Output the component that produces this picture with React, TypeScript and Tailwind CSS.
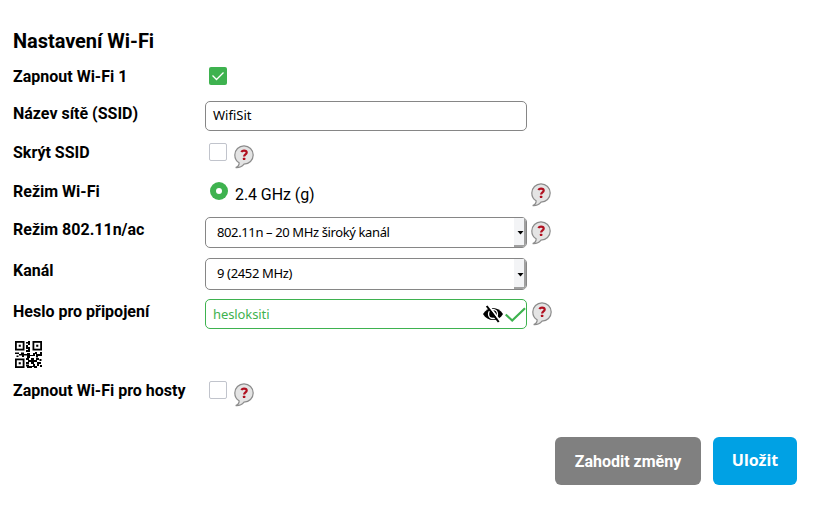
import type { ReactNode } from "react";

const finders = [
  [0, 0],
  [17.5, 0],
  [0, 17.5],
];

function QrCode() {
  return (
    <svg width="27" height="27" viewBox="0 0 27 27" className="block">
      {finders.map(([x, y]) => (
        <g key={`${x}-${y}`} transform={`translate(${x} ${y})`}>
          <rect x=".9" y=".9" width="7.700" height="7.700" fill="none" stroke="#000" strokeWidth="1.800" />
          <rect x="3.700" y="3.700" width="2.100" height="2.100" />
        </g>
      ))}
      <path d="M11 1h2v1.500h-2zM13 0h2v4h-2zM11 4h2v4h-2zM13 6h2v5h-2zM11 9h2v2h-2zM0 11.500h4V13h2v-1.500h3V13h3v1.500H9V16H7v-1.500H4V13H0zM1.500 14.500h2V16h-2zM12 12h3v2h3v-2h2v3h-5v2h-3zM20 11h2v2h3v-2h2v4h-4v1.500h-2V13h-1zM11 17h3v2h2v-2h3v2h2v-2h3v2h-2v2h-3v2h-3v-2h-2v2h-3v-2h2v-2h-2zM24.500 18h2v2h-2zM22 21h4v2h-2v2h-2zM11 23.500h3V25h4v-2h2v2h2v2h-3v-1h-2v1h-5v-1.500h-1zM25 24h2v2h-2z" />
    </svg>
  );
}

function Help({ className = "" }: { className?: string }) {
  return (
    <svg width="20" height="24" viewBox="0 0 20 24" className={`block shrink-0 ${className}`}>
      <path
        d="M10 .8C4.9.8.8 4.9.8 10c0 3.4 1.7 6.2 4.3 7.8.2 2-.9 3.700-3.400 4.800 3.500.3 6.300-1 8.300-3.500 5.100 0 9.200-4 9.200-9.100S15.100.8 10 .8Z"
        fill="#e4e4e4"
        stroke="#8c8c8c"
        strokeWidth="1.200"
      />
      <path d="M7.300 7C8 5.900 8.900 5.600 10 5.600c1.700 0 2.700.8 2.700 2 0 1.900-2.600 1.900-2.600 4" fill="none" stroke="#b01020" strokeWidth="2.200" />
      <rect x="8.900" y="12.700" width="2.400" height="2.300" rx=".5" fill="#b01020" />
    </svg>
  );
}

function Row({ label, height, children }: { label: string; height: string; children: ReactNode }) {
  return (
    <div className={`flex items-start ${height}`}>
      <div className="w-48 shrink-0 pt-px text-base leading-6 font-bold whitespace-nowrap">{label}</div>
      {children}
    </div>
  );
}

function Box() {
  return <div className="mt-[3px] ml-1 h-[18px] w-[18px] rounded-[2px] border border-[#c1c4cc]" />;
}

function Select({ children, height }: { children: ReactNode; height: string }) {
  return (
    <div className={`flex w-[322px] overflow-hidden rounded-[5px] border border-[#868686] ${height}`}>
      <div className="flex flex-1 items-center pl-[11px] font-['Noto_Sans',sans-serif] text-[13px]">{children}</div>
      <div className="flex w-[12px] items-center justify-end border-r-2 border-b-2 border-[#a0a0a0] bg-[#f3f4f6]">
        <svg width="7" height="4" viewBox="0 0 7 4" className="mt-[3px] block shrink-0">
          <path d="M.5 0h6l-3 3.500z" />
        </svg>
      </div>
    </div>
  );
}

export default function App() {
  return (
    <div className="h-[512px] w-[822px] bg-white pt-[26px] pl-[13px] font-[Roboto,sans-serif] text-black">
      <h1 className="h-[38px] text-xl leading-[30px] font-bold tracking-[-0.05px]">Nastavení Wi-Fi</h1>
      <Row label="Zapnout Wi-Fi 1" height="h-[37px]">
        <div className="mt-[3px] ml-1 h-[18px] w-[18px] rounded-[2px] bg-[#3eb24f]">
          <svg width="18" height="18" viewBox="0 0 18 18" fill="none" stroke="white" strokeWidth="1.3">
            <path d="m3.500 8.500 4 4 7-7" />
          </svg>
        </div>
      </Row>
      <Row label="Název sítě (SSID)" height="h-[39px]">
        <div className="flex h-[30px] w-[322px] items-center rounded-[5px] border border-[#868686] pl-[7px] font-['Noto_Sans',sans-serif] text-[13px]">
          WifiSit
        </div>
      </Row>
      <Row label="Skrýt SSID" height="h-[39px]">
        <Box />
        <Help className="mt-[5px] ml-[7px]" />
      </Row>
      <Row label="Režim Wi-Fi" height="h-[38px]">
        <div className="mt-[3px] ml-[5px] flex h-[18px] w-[18px] items-center justify-center rounded-full bg-[#3eb24f]">
          <div className="h-[6px] w-[6px] rounded-full bg-white" />
        </div>
        <div className="mt-1 ml-[7px] w-[296px] text-base leading-6 tracking-[-0.08px]">2.4 GHz (g)</div>
        <Help className="mt-1" />
      </Row>
      <Row label="Režim 802.11n/ac" height="h-[41px]">
        <Select height="h-[31px]">
          <span className="tracking-[-0.38px]">802.11n – 20 MHz široký kanál</span>
        </Select>
        <Help className="mt-1 ml-1" />
      </Row>
      <Row label="Kanál" height="h-[41px]">
        <Select height="h-8">
          <span className="tracking-[-0.35px]">9 (2452 MHz)</span>
        </Select>
      </Row>
      <Row label="Heslo pro připojení" height="h-[39px]">
        <div className="flex h-[30px] w-[322px] items-center rounded-[5px] border border-[#3eb24f] pl-[7px] font-['Noto_Sans',sans-serif] text-[13px] text-[#3eb24f]">
          <span className="flex-1 pt-px tracking-[-0.1px]">hesloksiti</span>
          <svg width="20" height="18" viewBox="0 0 20 18" className="shrink-0">
            <path d="M0 9C4.500 1 15.500 1 20 9 15.500 17 4.500 17 0 9Z" fill="#000" />
            <circle cx="10" cy="9" r="4.500" fill="none" stroke="#fff" strokeWidth="1.300" />
            <path d="M5.200 0 17.200 16" stroke="#fff" strokeWidth="2" />
            <path d="M3.700 1 15.700 17" stroke="#000" strokeWidth="2" />
          </svg>
          <svg width="21" height="18" viewBox="0 0 21 18" fill="none" stroke="#3eb24f" strokeWidth="2.200" className="ml-[2px] shrink-0">
            <path d="m.7 9.500 6.500 6L20 3.300" />
          </svg>
        </div>
        <Help className="mt-[3px] ml-[5px]" />
      </Row>
      <div className="h-10 pt-[3px] pl-[2px]">
        <QrCode />
      </div>
      <Row label="Zapnout Wi-Fi pro hosty" height="h-[59px]">
        <Box />
        <Help className="mt-[5px] ml-[7px]" />
      </Row>
      <div className="flex justify-end gap-3 pr-[25px] text-white">
        <button className="h-12 w-[146px] rounded-[6px] bg-[#808080] pt-[2px] text-base font-bold">Zahodit změny</button>
        <button className="h-12 w-[84px] rounded-[6px] bg-[#00a1e4] pb-[2px] font-['Noto_Sans',sans-serif] text-base font-bold">Uložit</button>
      </div>
    </div>
  );
}
